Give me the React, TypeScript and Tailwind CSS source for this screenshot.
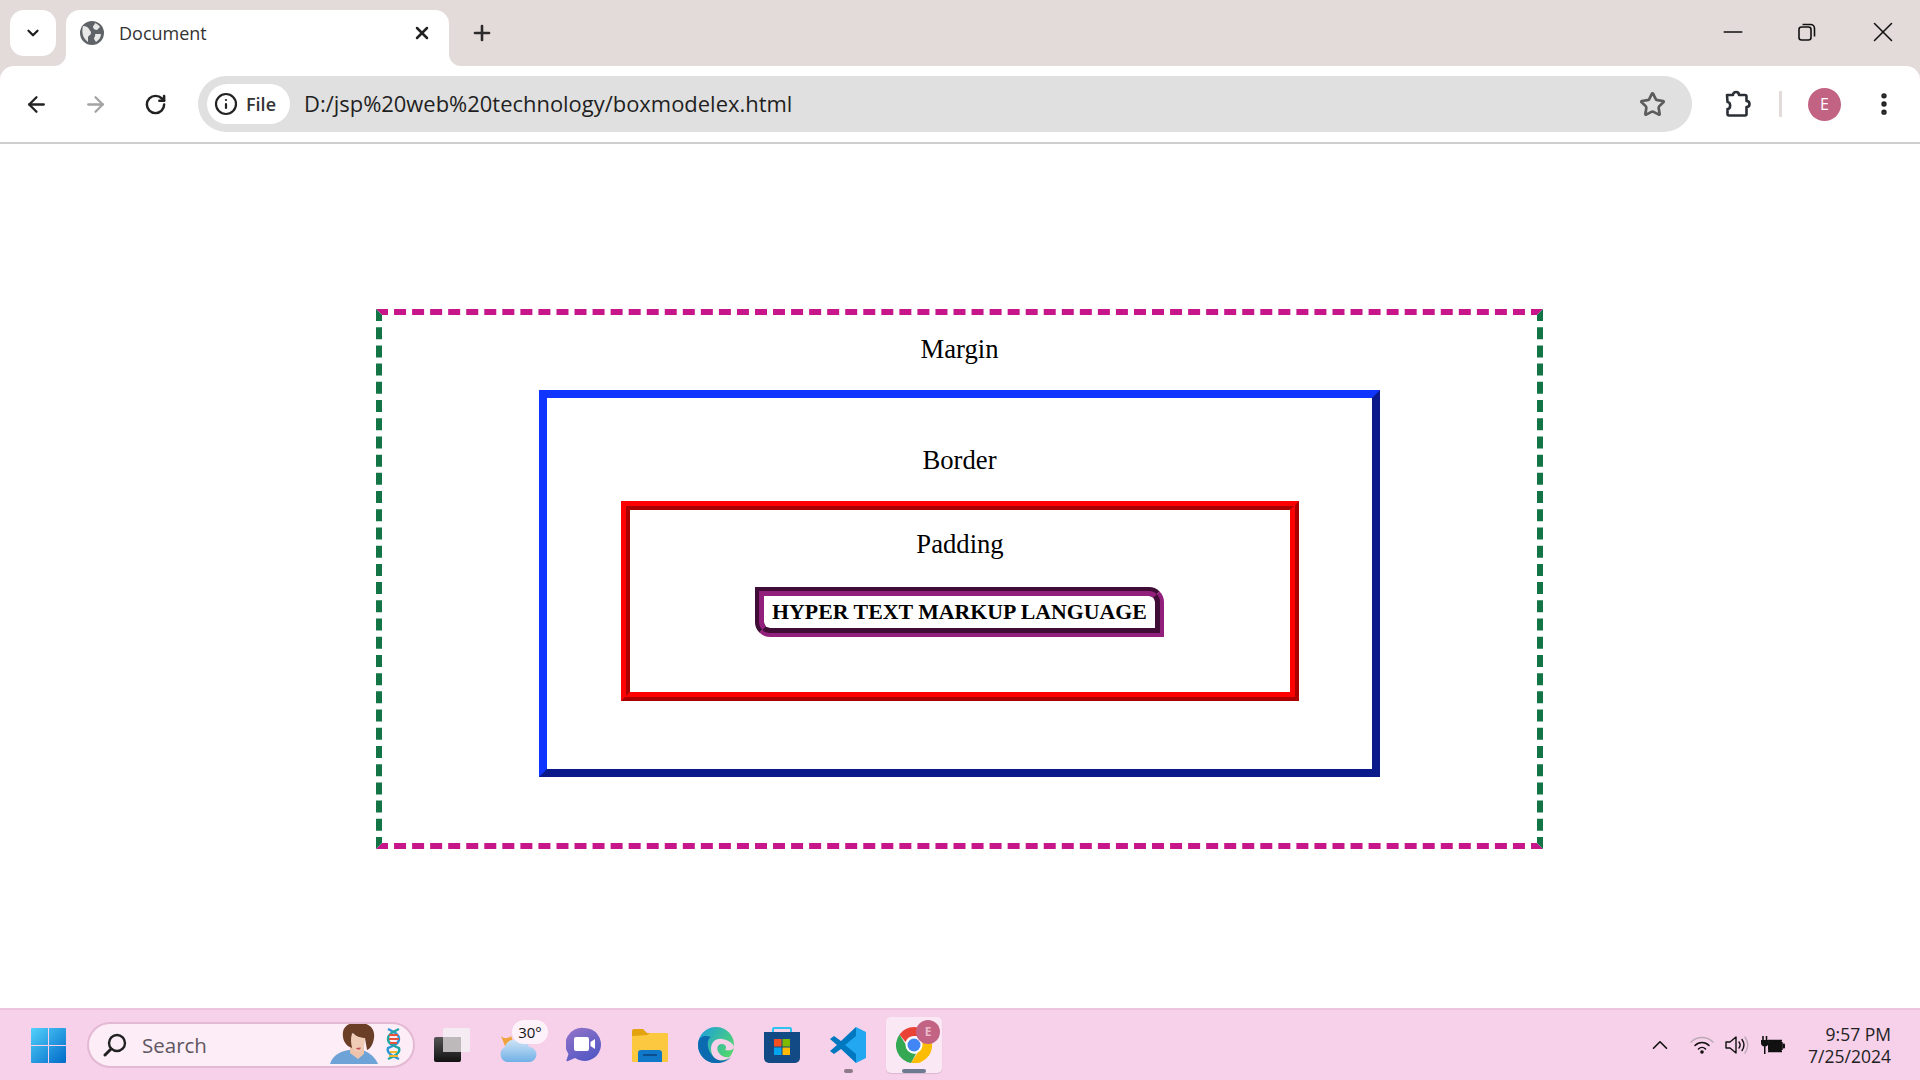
import { ArrowLeft, ArrowRight, ChevronDown, ChevronUp, Info, Minus, MoreVertical, Plus, RotateCw, Star, X } from 'lucide-react'

const uiFont = "font-['Open_Sans','Noto_Sans',sans-serif]"

function GlobeIcon() {
  return (
    <svg width="24" height="24" viewBox="0 0 24 24">
      <circle cx="12" cy="12" r="12" fill="#5f6368" />
      <path d="M3 5c3 0 5 1 6 3s2 2 2 4-2 2-3 4v5C4 18 1 13 3 5zM15 2c2 1 4 2 5 4l-3 3c-2 0-4-1-4-3s2-2 2-4zM15 13h6c0 3-2 6-5 8l-2-3c0-2 2-3 1-5z" fill="#e8e8e8" />
    </svg>
  )
}

function PuzzleIcon() {
  return (
    <svg width="28" height="28" viewBox="0 0 28 28" fill="none" stroke="#2b2f36" strokeWidth="2.6" strokeLinejoin="round">
      <path d="M4 5h6c0-4 6-4 6 0h6a1.5 1.5 0 0 1 1.5 1.5V11c4 0 4 6 0 6v7a1.5 1.5 0 0 1-1.5 1.5H6A1.5 1.5 0 0 1 4.500 24v-5c3.500 0 3.500-7 0-7z" />
    </svg>
  )
}

function RestoreIcon() {
  return (
    <svg width="18" height="18" viewBox="0 0 18 18" fill="none" stroke="#111" strokeWidth="1.6">
      <rect x="1" y="4" width="12" height="13" rx="2.500" />
      <path d="M4.500 1.500h8a4 4 0 0 1 4 4v8" />
    </svg>
  )
}

function WindowsLogo() {
  return (
    <svg width="35" height="35" viewBox="0 0 35 35">
      <defs>
        <linearGradient id="win" x1="0" y1="0" x2="1" y2="1">
          <stop offset="0" stopColor="#52d1fb" />
          <stop offset="1" stopColor="#0069c8" />
        </linearGradient>
      </defs>
      <path d="M1 0h16v17H0V1a1 1 0 0 1 1-1zM18 0h16a1 1 0 0 1 1 1v16H18zM0 18h17v17H1a1 1 0 0 1-1-1zM18 18h17v16a1 1 0 0 1-1 1H18z" fill="url(#win)" />
    </svg>
  )
}

function SearchArt() {
  return (
    <svg width="74" height="44" viewBox="0 0 74 44">
      <path d="M0 42c3-10 12-13 19-14l10-1c8 2 15 6 19 15z" fill="#6ea3d8" />
      <path d="M20 20h14v12l-6 5-8-6z" fill="#ecc3ad" />
      <path d="M13 10C14 2 24-1 33 1s12 8 11 15-4 11-7 12l-2-12c-5 0-10-2-12-5-2 4-2 8-1 15-7-2-10-9-9-16z" fill="#6b3f27" />
      <path d="M22 11c3 3 8 5 13 5 0 7-2 14-7 14-6 0-8-9-6-19z" fill="#f0cbb6" />
      <path d="M26 26l5-.5-1 2h-3z" fill="#c2545b" />
      <path d="M58 7c6 3 11 5 11 10s-6 7-11 9c-2 5 6 9 11 11" fill="none" stroke="#2f96d6" strokeWidth="2.400" />
      <path d="M69 7c-6 3-11 5-11 10s6 7 11 9c2 5-6 9-11 11" fill="none" stroke="#22a6a0" strokeWidth="2.400" />
      <path d="M59 13h9M59 17h10M60 21h7" stroke="#e5533d" strokeWidth="1.800" />
      <path d="M60 30h7M59 34h9" stroke="#f3b62f" strokeWidth="1.800" />
    </svg>
  )
}

function TaskViewIcon() {
  return (
    <svg width="36" height="34" viewBox="0 0 36 34">
      <defs>
        <linearGradient id="tv" x1="0" y1="0" x2="0" y2="1">
          <stop offset="0" stopColor="#555" />
          <stop offset="1" stopColor="#111" />
        </linearGradient>
      </defs>
      <rect x="0" y="9" width="27" height="25" rx="2" fill="url(#tv)" />
      <rect x="9" y="0" width="27" height="24" rx="2" fill="#f5f0f3" fillOpacity="0.85" />
      <rect x="9" y="9" width="18" height="15" fill="#bdb9bb" />
    </svg>
  )
}

function WeatherIcon() {
  return (
    <svg width="38" height="32" viewBox="0 0 38 32">
      <defs>
        <linearGradient id="cl" x1="0" y1="0" x2="0" y2="1">
          <stop offset="0" stopColor="#cfe3f6" />
          <stop offset="1" stopColor="#6fb0e6" />
        </linearGradient>
      </defs>
      <path d="M2 6c3 3 7 3 10 0l3 8-9 2z" fill="#f0a33a" />
      <path d="M8 32a8 8 0 0 1-2-15c1-6 8-9 13-6 5-2 10 1 11 6a7.500 7.500 0 0 1 0 15z" fill="url(#cl)" />
    </svg>
  )
}

function MeetIcon() {
  return (
    <svg width="35" height="36" viewBox="0 0 35 36">
      <defs>
        <linearGradient id="mt" x1="0.2" y1="0" x2="0.8" y2="1">
          <stop offset="0" stopColor="#8f72c8" />
          <stop offset="1" stopColor="#4f56c4" />
        </linearGradient>
      </defs>
      <path d="M18 1a16.500 16.500 0 1 1-9 30l-7 3c-1 .5-2 0-1.500-1l2-6A16.500 16.500 0 0 1 18 1z" fill="url(#mt)" />
      <rect x="8" y="10" width="15" height="14" rx="2" fill="#fff" />
      <path d="M24.500 15l4.500-3v10l-4.500-3z" fill="#fff" />
    </svg>
  )
}

function FolderIcon() {
  return (
    <svg width="36" height="33" viewBox="0 0 36 33">
      <path d="M0 2a2 2 0 0 1 2-2h9l4 4h19a2 2 0 0 1 2 2v25a2 2 0 0 1-2 2H2a2 2 0 0 1-2-2z" fill="#e2a30f" />
      <path d="M0 7l15-1 3-2h16a2 2 0 0 1 2 2v25a2 2 0 0 1-2 2H2a2 2 0 0 1-2-2z" fill="#fcc83f" />
      <path d="M6 33V24a3 3 0 0 1 3-3h18a3 3 0 0 1 3 3v9z" fill="#0f78c8" />
      <rect x="11" y="25" width="14" height="2" fill="#0b4f8c" />
    </svg>
  )
}

function EdgeIcon() {
  return (
    <svg width="36" height="36" viewBox="0 0 36 36">
      <defs>
        <linearGradient id="eg" x1="0" y1="0" x2="1" y2="0.7">
          <stop offset="0" stopColor="#1b9de2" />
          <stop offset="1" stopColor="#52d86a" />
        </linearGradient>
      </defs>
      <circle cx="18" cy="18" r="18" fill="url(#eg)" />
      <path d="M0 18C0 8 8 8 13 10c-5 2-5 16 6 22 5 3 11 1 14-2-5 6-12 6-16 6C8 36 0 28 0 18z" fill="#0c6ab0" />
      <path d="M13 22c0-7 5-11 11-10 7 1 12 5 12 8 0 3-5 4-9 3 2-2 1-6-3-6-5 0-6 5-3 9 2 3 6 5 11 4-5 4-10 4-14 2-3-2-5-6-5-10z" fill="#f7d0ea" />
    </svg>
  )
}

function StoreIcon() {
  return (
    <svg width="36" height="36" viewBox="0 0 36 36">
      <path d="M9 6V2a1 1 0 0 1 1-1h16a1 1 0 0 1 1 1v4" fill="none" stroke="#2cc3f0" strokeWidth="2" />
      <path d="M0 5h36v26a5 5 0 0 1-5 5H5a5 5 0 0 1-5-5z" fill="#114a85" />
      <rect x="10" y="12" width="7.500" height="7.500" fill="#f25022" />
      <rect x="18.500" y="12" width="7.500" height="7.500" fill="#7fba00" />
      <rect x="10" y="20.500" width="7.500" height="7.500" fill="#00a4ef" />
      <rect x="18.500" y="20.500" width="7.500" height="7.500" fill="#ffb900" />
    </svg>
  )
}

function VsCodeIcon() {
  return (
    <svg width="36" height="36" viewBox="0 0 36 36">
      <path d="M26 0L11 14 4 9 0 12l7 6-7 6 4 3 7-5 15 14z" fill="#0078c0" />
      <path d="M26 0v9l-11 9 11 9v9l10-5V5z" fill="#22a7f0" />
    </svg>
  )
}

function ChromeIcon() {
  return (
    <svg width="36" height="36" viewBox="0 0 36 36">
      <path d="M18 0a18 18 0 0 1 15.600 9H18a9 9 0 0 0-8.500 6L3.500 7.500A18 18 0 0 1 18 0z" fill="#ea4335" />
      <path d="M3.500 7.500L10 18a9 9 0 0 0 10 8.800L15 36A18 18 0 0 1 3.500 7.500z" fill="#34a853" />
      <path d="M33.600 9A18 18 0 0 1 15 36l7-11a9 9 0 0 0 2.500-13z" fill="#fbbc04" />
      <circle cx="18" cy="18" r="8.500" fill="#fff" />
      <circle cx="18" cy="18" r="6.500" fill="#4285f4" />
    </svg>
  )
}

function WifiIcon() {
  return (
    <svg width="24" height="20" viewBox="0 0 24 20" fill="none" strokeLinecap="round" strokeWidth="1.600">
      <path d="M1 7c6-6 16-6 22 0" stroke="#bbaab5" />
      <path d="M5 10.500c4-4 10-4 14 0" stroke="#111" />
      <path d="M8.500 14c2-2 5-2 7 0" stroke="#111" />
      <circle cx="12" cy="17" r="1.800" fill="#111" stroke="none" />
    </svg>
  )
}

function VolumeIcon() {
  return (
    <svg width="24" height="20" viewBox="0 0 24 20" fill="none" strokeWidth="1.400">
      <path d="M1 7h4l6-5v16l-6-5H1z" stroke="#111" strokeLinejoin="round" />
      <path d="M14 7c1.500 2 1.500 4 0 6M17 4.500c2.500 3.500 2.500 7.500 0 11" stroke="#111" strokeLinecap="round" />
      <path d="M20 2c3.500 5 3.500 11 0 16" stroke="#bbaab5" strokeLinecap="round" />
    </svg>
  )
}

function BatteryIcon() {
  return (
    <svg width="24" height="20" viewBox="0 0 24 20">
      <path d="M2 1v4M5.500 1v4" stroke="#111" strokeWidth="1.600" />
      <path d="M0 5h7.500v3a3.500 3.500 0 0 1-3 3.500V19H3v-7.500A3.500 3.500 0 0 1 0 8z" fill="#111" />
      <rect x="7" y="5.500" width="14" height="11" rx="2" fill="#111" />
      <path d="M7 5.500h14M21 7v8M7 16.500h14" stroke="#111" strokeWidth="1.400" />
      <rect x="21.500" y="8.500" width="2.500" height="5" rx="1" fill="#111" />
    </svg>
  )
}

function BrowserChrome() {
  return (
    <div className={`bg-[#e3dbd9] ${uiFont}`}>
      {/* tab strip */}
      <div className="flex h-[66px] pt-[10px] pl-[10px]">
        <div className="flex h-[46px] w-[46px] items-center justify-center rounded-[14px] bg-white">
          <ChevronDown size={18} strokeWidth={3} className="text-[#1f1f1f]" />
        </div>
        <div className="relative ml-[10px] flex h-[56px] w-[383px] items-center rounded-t-[14px] bg-white pr-[14px] pb-[10px] pl-[14px]">
          <svg className="absolute bottom-0 left-[-12px]" width="12" height="12" viewBox="0 0 12 12">
            <path d="M12 0v12H0a12 12 0 0 0 12-12z" fill="#fff" />
          </svg>
          <svg className="absolute right-[-12px] bottom-0" width="12" height="12" viewBox="0 0 12 12">
            <path d="M0 0v12h12A12 12 0 0 1 0 0z" fill="#fff" />
          </svg>
          <GlobeIcon />
          <span className="ml-[15px] text-[18px] text-[#333]">Document</span>
          <X size={20} strokeWidth={3} className="mr-[3px] ml-auto text-[#222]" />
        </div>
        <div className="ml-[21px] flex h-[46px] items-center">
          <Plus size={24} strokeWidth={2.6} className="text-[#2b2b2b]" />
        </div>
        <div className="ml-auto flex h-[46px] items-center pb-[2px]">
          <div className="flex w-[75px] justify-center"><Minus size={30} strokeWidth={1.2} className="text-[#111]" /></div>
          <div className="flex w-[75px] justify-center pr-[2px]"><RestoreIcon /></div>
          <div className="flex w-[75px] justify-center"><X size={34} strokeWidth={1.1} className="text-[#111]" /></div>
        </div>
      </div>

      {/* toolbar */}
      <div className="flex h-[76px] items-center rounded-t-[14px] bg-white pl-[6px]">
        <div className="flex w-[60px] justify-center"><ArrowLeft size={25} strokeWidth={2.2} className="text-[#222]" /></div>
        <div className="flex w-[60px] justify-center pr-[2px]"><ArrowRight size={25} strokeWidth={2.2} className="text-[#a3a3a3]" /></div>
        <div className="flex w-[60px] justify-center pr-[2px]"><RotateCw size={23} strokeWidth={2.6} className="text-[#222]" /></div>
        <div className="ml-[12px] flex h-[56px] w-[1494px] items-center rounded-full bg-[#e0e0e0] pr-[26px] pl-[9px]">
          <div className="flex h-[40px] w-[83px] items-center rounded-full bg-white pl-[7px]">
            <Info size={24} strokeWidth={2.2} className="text-[#222]" />
            <span className="ml-[8px] text-[18px] font-semibold text-[#333]">File</span>
          </div>
          <span className="ml-[14px] text-[21.950px] text-[#1f1f1f]">D:/jsp%20web%20technology/boxmodelex.html</span>
          <Star size={27} strokeWidth={2.4} className="ml-auto text-[#5c5c5c]" />
        </div>
        <div className="ml-[31px] flex w-[28px] justify-center"><PuzzleIcon /></div>
        <div className="ml-[28px] h-[26px] w-[3px] bg-[#e3dbd9]" />
        <div className="ml-[26px] flex h-[33px] w-[33px] items-center justify-center rounded-full bg-[#c26383] text-[16px] text-white">E</div>
        <MoreVertical size={28} strokeWidth={2.6} className="ml-[29px] text-[#222]" />
      </div>
      <div className="h-[2px] bg-[#cfcfcf]" />
    </div>
  )
}

function BoxModel() {
  return (
    <div className="flex-1 bg-white pt-[165px] pl-[376px] font-['Liberation_Serif',serif] text-[26.670px] leading-[30px] text-black">
      <div className="h-[540px] w-[1167px] border-[6px] border-dashed border-x-[#137546] border-y-[#c7158a] pt-[19px] text-center">
        <p>Margin</p>
        <div className="mx-auto mt-[26px] h-[387px] w-[841px] border-[8px] border-t-[#0f35ff] border-r-[#0a1a8a] border-b-[#0a1a8a] border-l-[#0f35ff] pt-[47px]">
          <p>Border</p>
          <div className="mt-[26px] ml-[74px] h-[200px] w-[678px] border-[9px] border-[#ff0000] pt-[19px] [border-style:ridge]">
            <p>Padding</p>
            <div className="mt-[28px] ml-[125px] h-[50px] w-[409px] rounded-tr-[15px] rounded-bl-[15px] border-[9px] border-[#931f7c] text-[21.850px] leading-[32px] font-bold [border-style:groove]">
              HYPER TEXT MARKUP LANGUAGE
            </div>
          </div>
        </div>
      </div>
    </div>
  )
}

function Taskbar() {
  return (
    <div className={`flex h-[72px] items-center border-t-2 border-[#eec3df] bg-[#f7d0ea] pl-[31px] ${uiFont}`}>
      <WindowsLogo />
      <div className="ml-[21px] flex h-[46px] w-[328px] items-center overflow-hidden rounded-full border-2 border-[#e3b9d3] bg-[#fcedf7] pl-[14px]">
        <svg width="24" height="24" viewBox="0 0 24 24" fill="none" stroke="#222" strokeWidth="2.400" strokeLinecap="round">
          <circle cx="14" cy="10" r="8" />
          <path d="M8 16l-6 6" strokeWidth="3" />
        </svg>
        <span className="ml-[15px] text-[20.500px] text-[#5f5660]">Search</span>
        <div className="mr-[9px] ml-auto self-end"><SearchArt /></div>
      </div>
      <div className="ml-[19px]"><TaskViewIcon /></div>
      <div className="relative mt-[2px] ml-[29px]">
        <WeatherIcon />
        <span className="absolute top-[-10px] left-[13px] flex h-[24px] w-[36px] items-center justify-center rounded-full bg-[#fdf2f9] text-[15px] text-[#111]">30°</span>
      </div>
      <div className="ml-[29px]"><MeetIcon /></div>
      <div className="ml-[31px]"><FolderIcon /></div>
      <div className="ml-[30px]"><EdgeIcon /></div>
      <div className="ml-[30px]"><StoreIcon /></div>
      <div className="relative ml-[30px]">
        <VsCodeIcon />
        <span className="absolute bottom-[-10px] left-[14px] h-[4px] w-[9px] rounded-full bg-[#8f7a8a]" />
      </div>
      <div className="relative ml-[20px] flex h-[56px] w-[56px] items-center justify-center rounded-[5px] bg-[#fbe8f5] shadow-[0_1px_1px_rgba(0,0,0,0.12)]">
        <ChromeIcon />
        <span className="absolute top-[3px] right-[2px] flex h-[24px] w-[24px] items-center justify-center rounded-full bg-[#c26383] text-[12px] font-bold text-[#e9b9c9]">E</span>
        <span className="absolute bottom-[0px] left-[16px] h-[4px] w-[24px] rounded-full bg-[#6e7a90]" />
      </div>

      {/* tray */}
      <div className="ml-auto flex items-center pr-[29px]">
        <ChevronUp size={26} strokeWidth={1.5} className="text-[#111]" />
        <div className="ml-[17px]"><WifiIcon /></div>
        <div className="ml-[11px]"><VolumeIcon /></div>
        <div className="ml-[12px]"><BatteryIcon /></div>
        <div className="ml-[23px] text-right text-[17.500px] leading-[22px] text-[#222]">
          <div>9:57 PM</div>
          <div>7/25/2024</div>
        </div>
      </div>
    </div>
  )
}

export default function App() {
  return (
    <div className="flex h-screen flex-col overflow-hidden">
      <BrowserChrome />
      <BoxModel />
      <Taskbar />
    </div>
  )
}
